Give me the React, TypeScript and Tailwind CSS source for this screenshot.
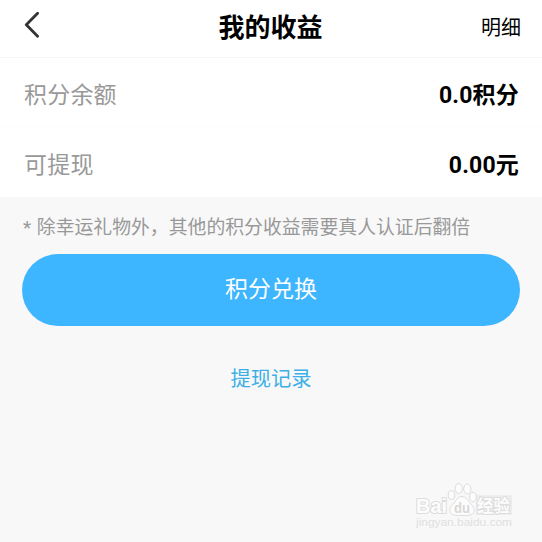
const font = "font-[Roboto,'Noto_Sans_CJK_SC',sans-serif]";

const BALANCES = [
  { label: '积分余额', value: '0.0积分', border: 'border-[#f6f6f6]' },
  { label: '可提现', value: '0.00元', border: 'border-[#fdfdfd]' },
];

function Watermark() {
  return (
    <div className="absolute top-[478px] left-[410px]">
      <svg width="110" height="56" viewBox="0 0 110 56" fill="#fcfcfc" stroke="#dddddd" strokeWidth="1">
        <rect x="66" y="17" width="36" height="20" fill="#ededed" stroke="none" />
        <ellipse cx="41.5" cy="17" rx="3.3" ry="4.4" />
        <ellipse cx="48.7" cy="10.5" rx="3.6" ry="5" />
        <ellipse cx="57.3" cy="11" rx="3.6" ry="5" />
        <ellipse cx="63" cy="19" rx="3.3" ry="4.6" />
        <path d="M52 18.500c4 0 5.500 3.500 8 6.500s5 5 4 8.500-4 4-12 4-11-.5-12-4 1.500-5.500 4-8.500 4-6.500 8-6.500z" />
        <g fontWeight="700" paintOrder="stroke" strokeWidth="2">
          <text x="6" y="35" fontSize="20.5" fontFamily="Liberation Sans, sans-serif" textLength="31" lengthAdjust="spacingAndGlyphs">
            Bai
          </text>
          <text x="67" y="34" fontSize="16.5" fontFamily="Noto Sans CJK SC, sans-serif" textLength="33">
            经验
          </text>
        </g>
        <text
          x="44"
          y="34.5"
          fontSize="14.5"
          fontWeight="700"
          fontFamily="Liberation Sans, sans-serif"
          fill="#d8d8d8"
          stroke="none"
          textLength="16"
          lengthAdjust="spacingAndGlyphs"
        >
          du
        </text>
        <text
          x="6"
          y="48"
          fontSize="11"
          fontFamily="Liberation Sans, sans-serif"
          fill="#dfdfdf"
          stroke="none"
          textLength="96"
          lengthAdjust="spacingAndGlyphs"
        >
          jingyan.baidu.com
        </text>
      </svg>
    </div>
  );
}

export default function App() {
  return (
    <div className={`relative h-[542px] w-[542px] overflow-hidden bg-[#f8f8f8] ${font}`}>
      <header className="grid h-[57px] grid-cols-3 items-center bg-white pr-[21px] pb-[5px] pl-[24px]">
        <button type="button" aria-label="返回">
          <svg
            width="18"
            height="28"
            viewBox="0 0 18 28"
            fill="none"
            stroke="#333"
            strokeWidth="2.8"
            strokeLinecap="round"
            strokeLinejoin="round"
          >
            <path d="M13.6 1.300L2.300 12.800l11.300 11.400" />
          </svg>
        </button>
        <h1 className="-ml-1 pt-[3px] text-center text-[26px] leading-none font-bold text-black">我的收益</h1>
        <button type="button" className="pt-[3px] text-right text-[20px] leading-none text-black">明细</button>
      </header>

      {BALANCES.map((item) => (
        <div
          key={item.label}
          className={`flex h-[70px] items-center justify-between border-t bg-white pt-[7px] pr-[23px] pl-6 ${item.border}`}
        >
          <span className="text-[23px] tracking-[0.2px] text-[#999]">{item.label}</span>
          <span className="text-[23px] font-bold tracking-[0.2px] text-black">{item.value}</span>
        </div>
      ))}

      <p className="mt-[18px] pl-[23px] text-[18.85px] leading-[26px] text-[#999] [word-spacing:1px]">
        * 除幸运礼物外，其他的积分收益需要真人认证后翻倍
      </p>
      <button
        type="button"
        className="mt-[13px] ml-[22px] block h-[72px] w-[498px] rounded-full bg-[#3db5ff] pt-[1px] text-[23px] text-white"
      >
        积分兑换
      </button>
      <button type="button" className="mx-auto mt-[39px] block text-[20.3px] leading-[28px] text-[#3cb0e6]">
        提现记录
      </button>

      <Watermark />
    </div>
  );
}
